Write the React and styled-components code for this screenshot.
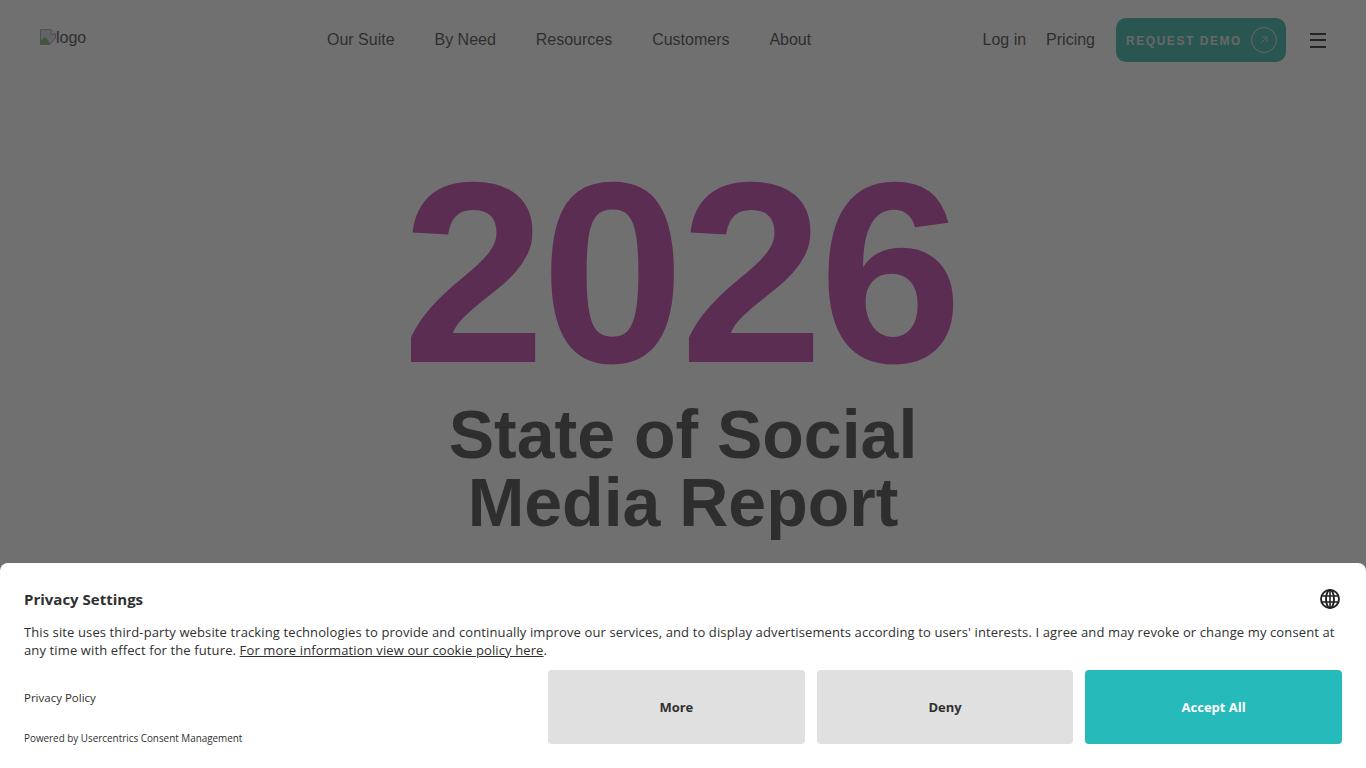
import React from "react";
import styled, { createGlobalStyle } from "styled-components";

const Global = createGlobalStyle`
  html, body { margin: 0; height: 100%; overflow: hidden; background: #fff; }
  body { font-family: "Liberation Sans", Arial, sans-serif; color: #333; }
  a { color: inherit; text-decoration: none; }
`;
const Page = styled.div`
  height: 768px;
  overflow: hidden;
`;
const Header = styled.header`
  display: flex;
  align-items: center;
  height: 80px;
  padding: 0 40px;
  box-sizing: border-box;
  margin-bottom: -2px;
`;
const Logo = styled.div`
  display: flex;
  align-items: flex-start;
  align-self: flex-start;
  width: 287px;
  flex: none;
  margin-top: 29px;
  font-size: 16px;
  line-height: 18px;
  color: #1f1f1f;
`;
const BrokenIcon = styled.svg`
  width: 16px;
  height: 16px;
  flex: none;
`;
const Nav = styled.nav`
  display: flex;
  gap: 39.9px;
  font-size: 16px;
  color: #1f1f1f;
`;
const Right = styled.div`
  display: flex;
  margin-left: auto;
  align-items: center;
  font-size: 16px;
  color: #1f1f1f;
`;
const RightLink = styled.a`
  margin-right: ${(p) => p.$gap}px;
`;
const Demo = styled.a`
  display: flex;
  align-items: center;
  justify-content: space-between;
  box-sizing: border-box;
  width: 170px;
  height: 44px;
  padding: 0 9px 0 10px;
  border-radius: 10px;
  background: #14a89a;
  color: #e0e0e0;
  font-size: 12px;
  font-weight: 700;
  letter-spacing: 1.55px;
`;
const DemoLabel = styled.span`
  margin-top: 2px;
`;
const DemoCircle = styled.span`
  display: flex;
  align-items: center;
  justify-content: center;
  width: 26px;
  height: 26px;
  box-sizing: border-box;
  border: 1px solid #d8d8d8;
  border-radius: 50%;
`;
const Burger = styled.button`
  display: flex;
  flex-direction: column;
  gap: 4.5px;
  width: 16px;
  margin: 0 0 0 24px;
  padding: 0;
  border: 0;
  background: none;
`;
const BurgerLine = styled.span`
  display: block;
  width: 16px;
  height: 2px;
  background: #000;
`;
const Hero = styled.main`
  display: flex;
  flex-direction: column;
  align-items: center;
  text-align: center;
`;
const Year = styled.div`
  margin: 69px 6px 0 0;
  font-size: 258px;
  font-weight: 700;
  line-height: 252px;
  letter-spacing: -4.5px;
  color: #bb1f9b;
`;
const Title = styled.h1`
  margin: 1px 0 0;
  font-size: 68px;
  line-height: 68px;
  font-weight: 700;
  color: #222;
`;
const Overlay = styled.div`
  position: fixed;
  inset: 0;
  background: rgba(51, 51, 51, 0.7);
`;
const Banner = styled.section`
  position: fixed;
  left: 0;
  right: 0;
  bottom: 0;
  box-sizing: border-box;
  height: 205px;
  padding: 24px;
  background: #fff;
  border-radius: 8px 8px 0 0;
  font-family: "Open Sans", sans-serif;
  color: #303030;
`;
const BannerTop = styled.div`
  display: flex;
  justify-content: space-between;
  align-items: center;
  height: 24px;
`;
const BannerTitle = styled.h2`
  margin: 0;
  font-size: 15px;
  font-weight: 700;
  line-height: 24px;
  color: #303030;
`;
const Globe = styled.svg`
  width: 20px;
  height: 20px;
  margin-right: 2px;
`;
const BannerText = styled.p`
  margin: 12px 0 0;
  font-size: 13px;
  line-height: 18px;
  letter-spacing: 0.12px;
  color: #303030;
`;
const Underlined = styled.a`
  text-decoration: underline;
`;
const BannerBottom = styled.div`
  display: flex;
  justify-content: space-between;
  margin-top: 11px;
`;
const Links = styled.div`
  display: flex;
  flex-direction: column;
  justify-content: space-between;
  padding: 21px 0 0;
  height: 54px;
`;
const SmallLink = styled.a`
  font-size: ${(p) => p.$size}px;
  line-height: 14px;
  color: #303030;
`;
const Buttons = styled.div`
  display: flex;
  gap: 12px;
  width: 794px;
`;
const Btn = styled.button`
  flex: 1;
  height: 74px;
  border: 0;
  border-radius: 4px;
  background: ${(p) => (p.$primary ? "#26baba" : "#e0e0e0")};
  color: ${(p) => (p.$primary ? "#fff" : "#303030")};
  font-family: "Open Sans", sans-serif;
  font-size: 13px;
  font-weight: 700;
`;

export default function App() {
  return (
    <Page>
      <Global />
      <Header>
        <Logo>
          <BrokenIcon viewBox="0 0 16 16">
            <path d="M0.5 0.5H11L15.5 5V9L10 15.5H0.5Z" fill="#c9d4e2" stroke="#8a8f96" />
            <path d="M1 15V11L5 8L8 11L10 15Z" fill="#6fa860" />
            <path d="M11 0.5V5H15.5" fill="#fff" stroke="#8a8f96" />
          </BrokenIcon>
          <span>logo</span>
        </Logo>
        <Nav>
          <a>Our Suite</a>
          <a>By Need</a>
          <a>Resources</a>
          <a>Customers</a>
          <a>About</a>
        </Nav>
        <Right>
          <RightLink $gap={20}>Log in</RightLink>
          <RightLink $gap={21}>Pricing</RightLink>
          <Demo>
            <DemoLabel>REQUEST DEMO</DemoLabel>
            <DemoCircle>
              <svg width="10" height="10" viewBox="0 0 10 10" fill="none" stroke="#d8d8d8">
                <path d="M2 8L8 2M3.5 2H8V6.5" />
              </svg>
            </DemoCircle>
          </Demo>
          <Burger aria-label="menu">
            <BurgerLine />
            <BurgerLine />
            <BurgerLine />
          </Burger>
        </Right>
      </Header>
      <Hero>
        <Year>2026</Year>
        <Title>
          State of Social
          <br />
          Media Report
        </Title>
      </Hero>
      <Overlay />
      <Banner>
        <BannerTop>
          <BannerTitle>Privacy Settings</BannerTitle>
          <Globe viewBox="0 0 20 20" fill="none" stroke="#222" strokeWidth="1.9">
            <circle cx="10" cy="10" r="9" />
            <ellipse cx="10" cy="10" rx="4" ry="9" />
            <path d="M1.5 7H18.5M1.5 13H18.5M10 1V19" strokeWidth="1.6" />
          </Globe>
        </BannerTop>
        <BannerText>
          This site uses third-party website tracking technologies to provide and continually improve our services, and to display advertisements according to users' interests. I agree and may revoke or change my consent at any time with effect for the future. <Underlined>For more information view our cookie policy here</Underlined>.
        </BannerText>
        <BannerBottom>
          <Links>
            <SmallLink $size={11.5}>Privacy Policy</SmallLink>
            <SmallLink $size={9.9}>Powered by Usercentrics Consent Management</SmallLink>
          </Links>
          <Buttons>
            <Btn>More</Btn>
            <Btn>Deny</Btn>
            <Btn $primary>Accept All</Btn>
          </Buttons>
        </BannerBottom>
      </Banner>
    </Page>
  );
}
